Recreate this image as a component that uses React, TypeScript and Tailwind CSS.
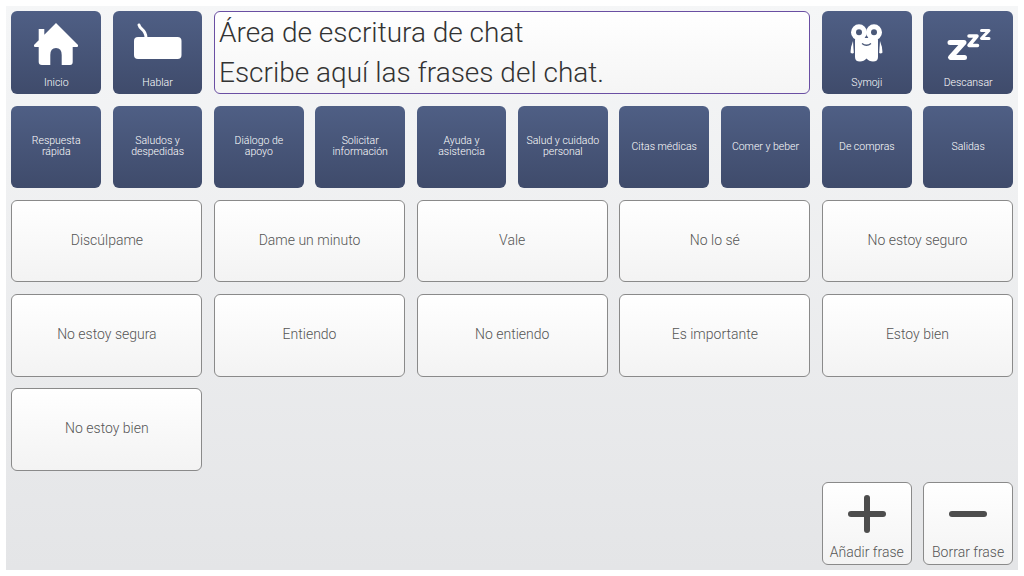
const topTiles = [
  'Respuesta rápida',
  'Saludos y despedidas',
  'Diálogo de apoyo',
  'Solicitar información',
  'Ayuda y asistencia',
  'Salud y cuidado personal',
  'Citas médicas',
  'Comer y beber',
  'De compras',
  'Salidas',
]

const phrases = [
  'Discúlpame',
  'Dame un minuto',
  'Vale',
  'No lo sé',
  'No estoy seguro',
  'No estoy segura',
  'Entiendo',
  'No entiendo',
  'Es importante',
  'Estoy bien',
  'No estoy bien',
]

const darkTile = 'rounded-md bg-gradient-to-b from-[#4f5f85] to-[#3f4b6b] text-white'
const lightTile = 'rounded-md border border-[#8a8a8a] bg-gradient-to-b from-white to-[#f3f3f3] text-[#555]'

function NavTile({ label, children }: { label: string; children: React.ReactNode }) {
  return (
    <div className={`${darkTile} flex flex-col items-center`}>
      <div className="flex h-[62px] w-full items-center justify-center">{children}</div>
      <span className="mt-[3px] text-[10.5px] leading-[13px]">{label}</span>
    </div>
  )
}

function ActionTile({ label, className, children }: { label: string; className: string; children: React.ReactNode }) {
  return (
    <div className={`${lightTile} ${className} flex flex-col items-center`}>
      <div className="flex h-[61px] w-full items-center justify-center">{children}</div>
      <span className="text-[14px] leading-[16px] whitespace-nowrap">{label}</span>
    </div>
  )
}

export default function App() {
  return (
    <div className="h-[576px] w-[1024px] overflow-hidden bg-white p-[6px] font-['Roboto',sans-serif] font-light">
      <div className="h-[564px] w-[1012px] bg-gradient-to-b from-[#f5f6f7] to-[#e4e5e7] pt-[5.4px] pl-[5.35px]">
        <div className="grid h-[553.6px] w-[1001.7px] grid-cols-10 grid-rows-6 gap-x-[11.5px] gap-y-[11.6px]">
          <NavTile label="Inicio">
            <svg width="60" height="55" viewBox="0 0 60 55" fill="#fff">
              <path d="M30 8 L52 30 Q52.500 32 51 32 L46.700 32 L46.700 47 Q46.700 50 44 50 L35.700 50 L35.700 40 Q35.700 33 30 33 Q24.300 33 24.300 40 L24.300 50 L16 50 Q12.700 50 12.700 47 L12.700 32 L9 32 Q7.500 32 8 30 L12.700 25.300 L12.700 14 L18.300 14 L18.300 19.700 Z" />
            </svg>
          </NavTile>
          <NavTile label="Hablar">
            <svg width="60" height="55" viewBox="0 0 60 55" fill="none">
              <path d="M11 10 C12 15 18 14 18 23" stroke="#fff" strokeWidth="3" strokeLinecap="round" />
              <rect x="6" y="22" width="47.500" height="22" rx="4" fill="#fff" />
            </svg>
          </NavTile>
          <div className="col-span-6 flex flex-col justify-center rounded-md border border-[#6a4fa3] bg-gradient-to-b from-white to-[#f5f5f5] px-1 text-[28px] leading-[40px] text-[#333]">
            <div>Área de escritura de chat</div>
            <div>Escribe aquí las frases del chat.</div>
          </div>
          <NavTile label="Symoji">
            <svg width="60" height="55" viewBox="-3 0 60 55" fill="#fff">
              <path d="M15 25 Q15 23 18 23 L35 23 Q38 23 38 25 L38 42 Q38 46.500 33 46.500 Q29 46.500 26.500 43.500 Q24 46.500 20 46.500 Q15 46.500 15 42 Z" />
              <path d="M13 26 Q10.500 32 10.500 37.500 Q12 39 13.800 38 Z" />
              <path d="M40 26 Q42.500 32 42.500 37.500 Q41 39 39.200 38 Z" />
              <circle cx="19" cy="17.300" r="8" />
              <circle cx="34" cy="17.300" r="8" />
              <circle cx="19" cy="17.300" r="3" fill="#4a5878" />
              <circle cx="34" cy="17.300" r="3" fill="#4a5878" />
              <path d="M22 28.500 Q26.500 32 31 28.500" stroke="#4a5878" strokeWidth="1.300" fill="none" />
            </svg>
          </NavTile>
          <NavTile label="Descansar">
            <svg width="60" height="55" viewBox="-2 0 60 55" fill="none" stroke="#fff" strokeLinecap="round" strokeLinejoin="round">
              <path d="M10 27.500 H24 L10.500 42.500 H24.500" strokeWidth="5" />
              <path d="M29 21 H37 L29 30.500 H37.500" strokeWidth="3.500" />
              <path d="M41.500 15.500 H49 L41.500 23.500 H49" strokeWidth="3" />
            </svg>
          </NavTile>

          {topTiles.map((t) => (
            <div key={t} className={`${darkTile} flex items-center justify-center px-2 pb-[1px] text-center text-[10.5px] leading-[11px]`}>
              {t}
            </div>
          ))}

          {phrases.map((p) => (
            <div key={p} className={`${lightTile} col-span-2 flex items-center justify-center pb-[1px] text-[14px]`}>
              {p}
            </div>
          ))}

          <ActionTile label="Añadir frase" className="col-start-9 row-start-6">
            <svg width="40" height="40" viewBox="0 0 40 40" fill="#4d4d4d">
              <rect x="17" y="1" width="6" height="38" rx="3" />
              <rect x="1" y="17" width="38" height="6" rx="3" />
            </svg>
          </ActionTile>
          <ActionTile label="Borrar frase" className="col-start-10 row-start-6">
            <svg width="40" height="40" viewBox="0 0 40 40" fill="#4d4d4d">
              <rect x="1" y="17" width="38" height="6" rx="3" />
            </svg>
          </ActionTile>
        </div>
      </div>
    </div>
  )
}
